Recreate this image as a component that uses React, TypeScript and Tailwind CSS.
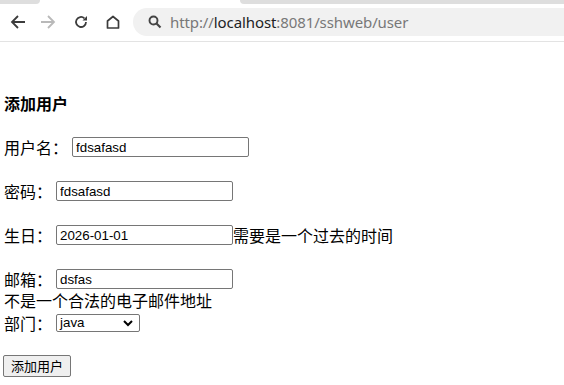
import React from 'react';

const cjk = "font-['Noto_Sans_CJK_SC',sans-serif]";
const latin = "font-['Liberation_Sans','Noto_Sans_CJK_SC',sans-serif]";

const inputClasses = `h-5 w-[177px] rounded-[2px] border border-[#767676] bg-white pl-[3px] text-[13.33px] leading-[18px] text-black outline-none ${latin}`;

const BackIcon: React.FC<{ color: string; flip?: boolean }> = ({ color, flip }) => (
    <svg width="16" height="16" viewBox="0 0 16 16" className={flip ? 'rotate-180' : ''}>
        <path d="M15 8H2M8 2L2 8l6 6" fill="none" stroke={color} strokeWidth="1.8" />
    </svg>
);

const Toolbar: React.FC = () => (
    <div className="flex h-[42px] flex-col border-b border-[#e3e3e3] bg-white">
        <div className="flex h-1">
            <div className="w-10 rounded-br-md bg-[#dedede]" />
            <div className="flex-grow" />
            <div className="w-[324px] rounded-bl-md bg-[#dedede]" />
        </div>
        <div className="flex h-[28px] mt-1 items-center">
            <div className="flex w-[133px] items-center">
                <span className="ml-[10px]"><BackIcon color="#3c3c3c" /></span>
                <span className="ml-[14px]"><BackIcon color="#b9b9b9" flip /></span>
                <span className="ml-[17px]">
                    <svg width="16" height="16" viewBox="0 0 16 16">
                        <path d="M13 8a5 5 0 1 1-1.6-3.7" fill="none" stroke="#3c3c3c" strokeWidth="1.8" />
                        <path d="M14 2v4.5H9.5z" fill="#3c3c3c" />
                    </svg>
                </span>
                <span className="ml-[16px]">
                    <svg width="16" height="16" viewBox="0 0 16 16">
                        <path d="M2.5 14V7L8 2.5 13.5 7V14z" fill="none" stroke="#3c3c3c" strokeWidth="1.7" strokeLinejoin="round" />
                    </svg>
                </span>
            </div>
            <div className="flex h-[28px] flex-grow items-center rounded-l-[14px] bg-[#f1f1f1]">
                <svg width="14" height="14" viewBox="0 0 14 14" className="ml-[15px]">
                    <circle cx="5.5" cy="5.5" r="4" fill="none" stroke="#444" strokeWidth="1.9" />
                    <path d="M8.5 8.5L12.5 12.5" stroke="#444" strokeWidth="2.2" />
                </svg>
                <span className="ml-[8px] text-[15px] text-[#787878] font-['Noto_Sans',sans-serif] tracking-[-0.1px]">
                    http://<span className="text-[#202124]">localhost</span>:8081/sshweb/user
                </span>
            </div>
        </div>
    </div>
);

const App: React.FC = () => {
    return (
        <div className={`h-[385px] w-[564px] overflow-hidden bg-white text-black ${cjk}`}>
            <Toolbar />
            <div className="pl-1 text-[16px] leading-[18px]">
                <div className="mt-[52px] font-bold">添加用户</div>

                <div className="mt-[24px] flex h-[22px] items-center">
                    <span>用户名：</span>
                    <input className={`ml-1 ${inputClasses}`} defaultValue="fdsafasd" />
                </div>

                <div className="mt-[22px] flex h-[22px] items-center">
                    <span>密码：</span>
                    <input className={`ml-1 ${inputClasses}`} defaultValue="fdsafasd" />
                </div>

                <div className="mt-[22px] flex h-[22px] items-center">
                    <span>生日：</span>
                    <input className={`ml-1 ${inputClasses}`} defaultValue="2026-01-01" />
                    <span>需要是一个过去的时间</span>
                </div>

                <div className="mt-[22px] flex h-[22px] items-center">
                    <span>邮箱：</span>
                    <input className={`ml-1 ${inputClasses}`} defaultValue="dsfas" />
                </div>
                <div className="mt-[1px] h-[18px]">不是一个合法的电子邮件地址</div>

                <div className="mt-[3px] flex h-[22px] items-center">
                    <span>部门：</span>
                    <div className="relative ml-1 flex h-[18px] w-[84px] items-center rounded-[2px] border border-[#767676] bg-white">
                        <span className={`pl-[3px] text-[13.33px] leading-[16px] ${latin}`}>java</span>
                        <svg width="10" height="7" viewBox="0 0 10 7" className="absolute right-[6px] top-[5px]">
                            <path d="M1 1l4 4 4-4" fill="none" stroke="#000" strokeWidth="2" />
                        </svg>
                    </div>
                </div>

                <div className="mt-5 flex h-[23px] items-center">
                    <button className="-ml-[1px] flex h-[22px] w-[68px] items-center justify-center rounded-[2px] border border-[#767676] bg-[#efefef] text-[13px] leading-[18px]">
                        添加用户
                    </button>
                </div>
            </div>
        </div>
    );
};

export default App;
